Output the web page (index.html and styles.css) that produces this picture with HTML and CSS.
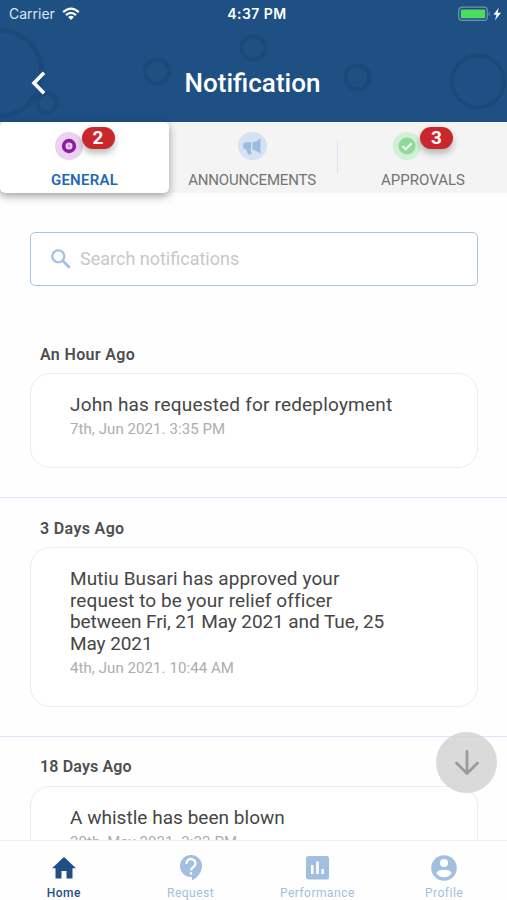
FILE: index.html
```html
<!DOCTYPE html>
<html lang="en">
<head>
<meta charset="utf-8">
<title>Notification</title>
<link rel="stylesheet" href="styles.css">
</head>
<body>
<div class="app">
  <header class="header">
    <svg class="bubbles" viewBox="0 0 507 122" fill="none" stroke="#1a4a7b">
      <circle cx="-1" cy="73" r="43" stroke-width="5"/>
      <circle cx="47" cy="103" r="9.500" stroke-width="4"/>
      <circle cx="157" cy="71.500" r="12" stroke-width="4"/>
      <circle cx="253.500" cy="48" r="12" stroke-width="4"/>
      <circle cx="357.500" cy="77.500" r="12" stroke-width="4"/>
      <circle cx="478" cy="81.500" r="26" stroke-width="4"/>
    </svg>
    <div class="status">
      <div class="status-left">
        <span class="carrier">Carrier</span>
        <svg width="18" height="14" viewBox="0 0 18 14" fill="none" stroke="#fff" stroke-width="2.300">
          <path d="M1.200 5.200Q9-2 16.800 5.200M4 8.100Q9 3.700 14 8.100"/>
          <path d="M6.100 9.900Q9 7.600 11.900 9.900L9 13Z" fill="#fff" stroke="none"/>
        </svg>
      </div>
      <span class="time">4:37 PM</span>
      <div class="status-right">
        <svg width="44" height="16" viewBox="0 0 44 16">
          <rect x=".7" y="1.200" width="28.600" height="13.200" rx="3.500" fill="none" stroke="#7892ad" stroke-width="1.200"/>
          <rect x="2.800" y="3.400" width="24.400" height="8.900" rx="1" fill="#4cdc60"/>
          <path d="M30.600 5.300q2.400 2.400 0 5Z" fill="#7892ad"/>
          <path d="M40.700 1.700L35.500 8.700h3L37 14.200L43 6.700H39.600Z" fill="#fff"/>
        </svg>
      </div>
    </div>
    <div class="titlebar">
      <svg class="back" width="16" height="26" viewBox="0 0 16 26" fill="none" stroke="#fff" stroke-width="3.600"><path d="M14 2.800L4 13L14 23.200"/></svg>
      <h1 class="title">Notification</h1>
    </div>
  </header>

  <nav class="tabs">
    <div class="tab active">
      <div class="tab-icon">
        <svg width="28" height="28" viewBox="0 0 28 28"><circle cx="14" cy="14" r="14" fill="#ead3ee"/><circle cx="14" cy="14" r="7.200" fill="#8e1ba4"/><circle cx="14" cy="14" r="3.500" fill="#ead3ee"/><circle cx="14" cy="14" r="1.400" fill="#c98fd3"/></svg>
        <span class="badge">2</span>
      </div>
      <span class="tab-label general">GENERAL</span>
    </div>
    <div class="tab middle">
      <div class="tab-icon center">
        <svg width="29" height="28" viewBox="0 0 29 28"><ellipse cx="14.500" cy="14" rx="14.500" ry="14" fill="#d4e2f2"/><path d="M22.500 6v16Q19 18.300 14.500 17.700V10.300Q19 9.700 22.500 6ZM13 10.300v7.400h-.8l1.700 3.800-3.500 1.200L8 17.400Q5 16.600 5 13.900Q5 10.300 8.500 10.300Z" fill="#9bbce0"/></svg>
      </div>
      <span class="tab-label announcements">ANNOUNCEMENTS</span>
    </div>
    <div class="tab divided">
      <div class="tab-icon">
        <svg width="28" height="28" viewBox="0 0 28 28"><circle cx="14" cy="14" r="14" fill="#d2f0d4"/><circle cx="14" cy="14" r="8.500" fill="#91d99a"/><path d="M9.300 14l3.400 3.300 6-6" fill="none" stroke="#eef8ef" stroke-width="2"/></svg>
        <span class="badge">3</span>
      </div>
      <span class="tab-label approvals">APPROVALS</span>
    </div>
  </nav>

  <main class="content">
    <div class="search">
      <svg width="20" height="20" viewBox="0 0 20 20" fill="none" stroke="#a1c1e3"><circle cx="7.300" cy="7.300" r="6" stroke-width="2.300"/><path d="M11.500 11.500L18.700 18.700" stroke-width="2.700"/></svg>
      <span class="placeholder">Search notifications</span>
    </div>

    <section class="group">
      <h2 class="group-title">An Hour Ago</h2>
      <article class="card">
        <p class="message loose">John has requested for redeployment</p>
        <p class="date">7th, Jun 2021. 3:35 PM</p>
      </article>
    </section>
    <section class="group">
      <h2 class="group-title">3 Days Ago</h2>
      <article class="card">
        <p class="message">Mutiu Busari has approved your<br>request to be your relief officer<br><span class="tight">between Fri, 21 May 2021 and Tue, 25</span><br><span class="tight">May 2021</span></p>
        <p class="date">4th, Jun 2021. 10:44 AM</p>
      </article>
    </section>
    <section class="group">
      <h2 class="group-title days">18 Days Ago</h2>
      <article class="card">
        <p class="message whistle">A whistle has been blown</p>
        <p class="date">20th, May 2021. 3:22 PM</p>
      </article>
    </section>
  </main>

  <div class="scroll-down">
    <svg width="26" height="26" viewBox="0 0 26 26" fill="none" stroke="#9b9b9b" stroke-width="2.800" stroke-linecap="round" stroke-linejoin="round"><path d="M13 1.500V23M2.500 13L13 23.500L23.500 13"/></svg>
  </div>

  <footer class="bottom">
    <div class="item current">
      <svg width="24" height="22" viewBox="0 0 24 22" fill="currentColor"><path d="M12 0L24 11.300H20.500V21.500H14.500V14H9.500V21.500H3.500V11.300H0Z"/></svg>
      <span class="item-label home">Home</span>
    </div>
    <div class="item">
      <svg width="22" height="26" viewBox="0 0 22 26" fill="currentColor"><path d="M11 0A11 11 0 0 1 22 11C22 17.500 17.500 22.500 12 25.500V22H11A11 11 0 0 1 11 0Z"/><g fill="none" stroke="#fff" stroke-width="2.300"><path d="M6.500 8.800A4.500 4.300 0 1 1 13.800 11.700C11.900 13 11 13.500 11 15.500"/><path d="M11 17.200V19.700"/></g></svg>
      <span class="item-label request">Request</span>
    </div>
    <div class="item">
      <svg width="23" height="24" viewBox="0 0 23 24"><rect width="23" height="23.500" rx="2.500" fill="currentColor"/><path d="M5 9h2.500v9H5ZM10.200 5.500h2.600V18h-2.600ZM15.400 13H18v5h-2.600Z" fill="#fff"/></svg>
      <span class="item-label performance">Performance</span>
    </div>
    <div class="item">
      <svg width="26" height="26" viewBox="0 0 26 26"><circle cx="13" cy="13" r="12.800" fill="currentColor"/><circle cx="13" cy="8" r="4" fill="#fff"/><path d="M5.200 18Q7.500 14.700 13 14.700T20.800 18Q18 22.200 13 22.200T5.200 18Z" fill="#fff"/></svg>
      <span class="item-label profile">Profile</span>
    </div>
  </footer>
</div>
</body>
</html>
```
FILE: styles.css
```css
* { box-sizing: border-box; }
body { margin: 0; background: #fefefe; font-family: Roboto, "Liberation Sans", sans-serif; }
h1, h2, p { margin: 0; }
svg { display: block; flex: none; }
.app { position: relative; width: 507px; height: 900px; overflow: hidden; display: flex; flex-direction: column; white-space: nowrap; }

.header { position: relative; flex: none; height: 122px; background: #1e5084; color: #fff; }
.bubbles { position: absolute; left: 0; top: 0; width: 507px; height: 122px; }
.status { position: relative; display: grid; grid-template-columns: 1fr auto 1fr; align-items: center; height: 27px; padding: 0 5px 0 9px; font-family: Inter, sans-serif; }
.status-left { display: flex; align-items: center; gap: 7px; }
.status-right { display: flex; justify-content: flex-end; }
.carrier { font-size: 14px; color: #dce6ef; }
.time { padding-left: 3px; font-size: 14px; font-weight: 600; letter-spacing: .45px; }
.titlebar { position: relative; display: grid; grid-template-columns: 60px 1fr 60px; align-items: center; height: 112px; }
.back { margin-left: 30px; }
.title { font-size: 26px; font-weight: 500; padding-right: 2px; text-align: center; }

.tabs { position: relative; z-index: 1; flex: none; display: flex; height: 71px; background: #f4f4f4; }
.tab { width: 169px; height: 71px; display: flex; flex-direction: column; align-items: center; padding-top: 10px; color: #737373; }
.middle { padding-right: 3px; }
.active { background: #fff; color: #2668b2; border-radius: 5px; box-shadow: 0 3px 9px rgba(0, 0, 0, .38); }
.tab-icon { position: relative; width: 60px; height: 28px; }
.center { display: flex; justify-content: center; }
.badge { position: absolute; left: 27px; top: -5px; width: 33px; height: 22px; border-radius: 11px; background: #c9272c; color: #fff; font-size: 19px; font-weight: 700; line-height: 22px; text-align: center; box-shadow: 0 4px 7px rgba(0, 0, 0, .28); }
.tab-label { margin-top: 12px; font-size: 15px; line-height: 17px; }
.general { font-weight: 600; letter-spacing: .25px; }
.announcements { letter-spacing: -.18px; }
.divided { position: relative; padding-left: 1px; }
.divided::before { content: ""; position: absolute; left: -1px; top: 19px; width: 1px; height: 33px; background: #dde2f4; }

.content { flex: 1; min-height: 0; overflow: hidden; padding-top: 39px; }
.search { display: flex; align-items: center; gap: 9px; width: 448px; height: 54px; margin: 0 30px 38px; padding-left: 20px; border: 1.500px solid #a8c5e4; border-radius: 5px; background: #fff; }
.placeholder { padding-bottom: 2px; font-size: 18px; color: #c7c7ca; }
.group { padding: 20px 29px 29px 30px; border-bottom: 1px solid #dbe4f8; }
.group-title { height: 22px; margin: 0 0 7px 10px; font-size: 16px; line-height: 22px; font-weight: 600; letter-spacing: .35px; color: #4e4e4e; }
.days { line-height: 20px; letter-spacing: .15px; }
.card { min-height: 95px; padding: 20px 38px 28px 39px; border: 1.500px solid #ececee; border-radius: 20px; background: #fff; }
.message { font-size: 19px; line-height: 21.700px; letter-spacing: .1px; color: #464646; }
.loose { letter-spacing: .19px; }
.tight { letter-spacing: -.08px; }
.whistle { letter-spacing: .03px; }
.date { margin-top: 3px; font-size: 15px; line-height: 20px; letter-spacing: .08px; color: #adadad; }

.scroll-down { position: absolute; z-index: 2; left: 436px; top: 732px; width: 61px; height: 61px; border-radius: 50%; background: rgba(210, 210, 210, .82); display: flex; align-items: center; justify-content: center; }

.bottom { flex: none; display: grid; grid-template-columns: repeat(4, 1fr); height: 60px; border-top: 1px solid #efefef; background: #fefefe; }
.item { display: grid; grid-template-rows: 29px 16px; row-gap: 3px; justify-items: center; align-items: center; align-content: start; padding: 12px 0 0 1px; color: #a3bfdf; }
.current { color: #1e5084; }
.item-label { font-size: 12px; line-height: 16px; letter-spacing: .5px; }
.home { font-weight: 500; }
```
